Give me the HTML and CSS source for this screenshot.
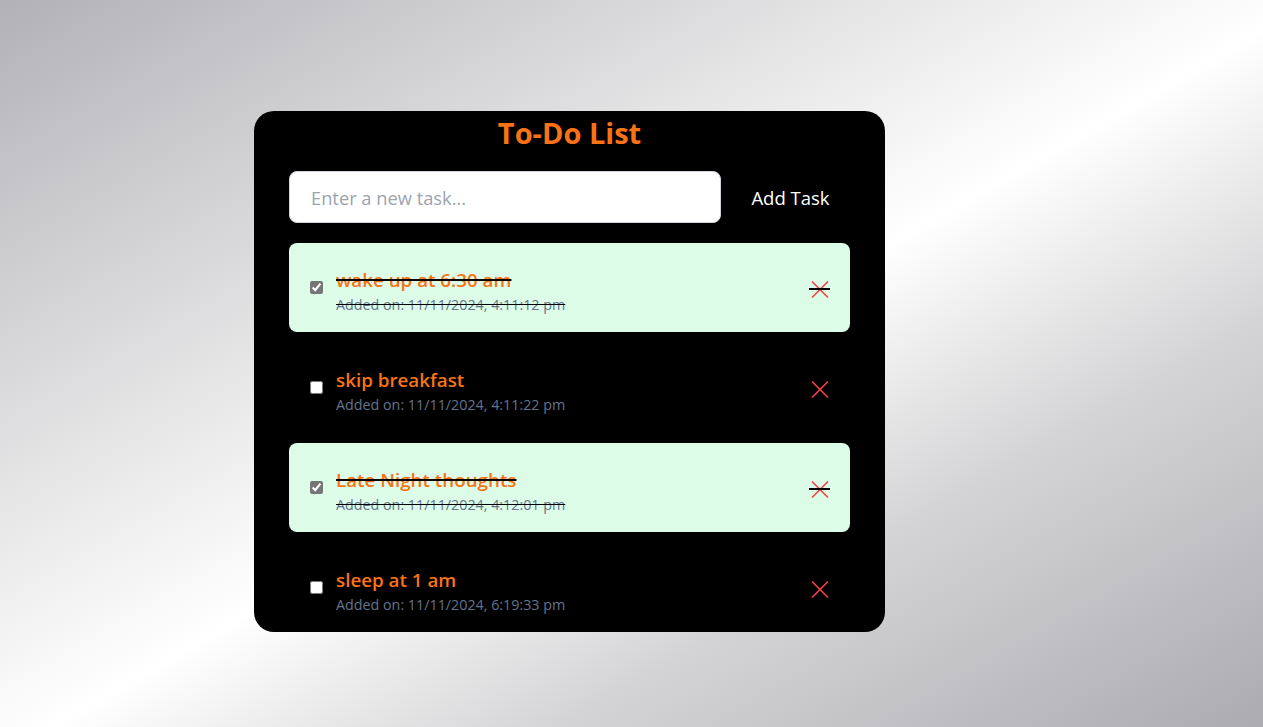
FILE: index.html
```html
<!DOCTYPE html>
<html lang="en">
<head>
<meta charset="utf-8">
<title>To-Do List</title>
<link rel="stylesheet" href="styles.css">
</head>
<body>
<main class="card">
  <h1 class="title">To-Do List</h1>
  <div class="add-row">
    <input class="task-input" type="text" placeholder="Enter a new task...">
    <button class="add-btn">Add Task</button>
  </div>
  <ul class="list">
    <li class="item done">
      <input class="check" type="checkbox" checked>
      <div class="info">
        <span class="name">wake up at 6:30 am</span>
        <span class="date">Added on: 11/11/2024, 4:11:12 pm</span>
      </div>
      <button class="del"><svg viewBox="0 0 18 17" width="18" height="17"><path d="M1 0.5 L17 16.5 M17 0.5 L1 16.5" stroke="#ef4444" stroke-width="1.6" fill="none"/></svg></button>
    </li>
    <li class="item">
      <input class="check" type="checkbox">
      <div class="info">
        <span class="name">skip breakfast</span>
        <span class="date">Added on: 11/11/2024, 4:11:22 pm</span>
      </div>
      <button class="del"><svg viewBox="0 0 18 17" width="18" height="17"><path d="M1 0.5 L17 16.5 M17 0.5 L1 16.5" stroke="#ef4444" stroke-width="1.6" fill="none"/></svg></button>
    </li>
    <li class="item done">
      <input class="check" type="checkbox" checked>
      <div class="info">
        <span class="name">Late Night thoughts</span>
        <span class="date">Added on: 11/11/2024, 4:12:01 pm</span>
      </div>
      <button class="del"><svg viewBox="0 0 18 17" width="18" height="17"><path d="M1 0.5 L17 16.5 M17 0.5 L1 16.5" stroke="#ef4444" stroke-width="1.6" fill="none"/></svg></button>
    </li>
    <li class="item">
      <input class="check" type="checkbox">
      <div class="info">
        <span class="name">sleep at 1 am</span>
        <span class="date">Added on: 11/11/2024, 6:19:33 pm</span>
      </div>
      <button class="del"><svg viewBox="0 0 18 17" width="18" height="17"><path d="M1 0.5 L17 16.5 M17 0.5 L1 16.5" stroke="#ef4444" stroke-width="1.6" fill="none"/></svg></button>
    </li>
  </ul>
</main>
</body>
</html>
```

FILE: styles.css
```css
* { box-sizing: border-box; }

html, body {
  margin: 0;
  height: 100%;
}

body {
  font-family: "Open Sans", "Noto Sans", sans-serif;
  background: linear-gradient(to bottom right, #b2b1b6 0%, #e6e6e7 35%, #ffffff 52%, #d4d4d6 72%, #acabb0 100%);
  padding: 111px 0 0 254px;
}

.card {
  width: 631px;
  height: 521px;
  background: #000;
  border-radius: 20px;
  padding: 0 35px;
  overflow: hidden;
}

.title {
  margin: 0;
  height: 44px;
  line-height: 44px;
  text-align: center;
  color: #f97316;
  font-size: 29px;
  font-weight: 700;
}

.add-row {
  display: flex;
  align-items: center;
  margin-top: 16px;
}

.task-input {
  width: 432px;
  height: 52px;
  border: 1px solid #d1d5db;
  border-radius: 8px;
  padding: 0 21px;
  font-family: inherit;
  font-size: 18.3px;
  color: #111;
  outline: none;
}

.task-input::placeholder { color: #9ca3af; }

.add-btn {
  flex: 1;
  background: transparent;
  border: none;
  color: #fff;
  font-family: inherit;
  font-size: 18.5px;
  text-align: center;
  padding: 0 0 0 10px;
  height: 52px;
}

.list {
  list-style: none;
  margin: 20px 0 0;
  padding: 0;
  display: flex;
  flex-direction: column;
  gap: 11px;
}

.item {
  height: 89px;
  flex-shrink: 0;
  display: flex;
  align-items: center;
  padding: 0 21px 0 17px;
  border-radius: 8px;
}

.item.done { background: #dcfce7; }

.check {
  width: 13px;
  height: 13px;
  margin: 3px 3px 3px 4px;
}

.item.done .check { accent-color: #767676; }

.info {
  flex: 1;
  display: flex;
  flex-direction: column;
  margin-left: 10px;
  gap: 2px;
  padding-top: 6px;
}

.name {
  color: #f97316;
  font-size: 18.8px;
  font-weight: 600;
  line-height: 26px;
}

.date {
  color: #64748b;
  font-size: 14.3px;
  line-height: 20px;
}

.done .name {
  text-decoration: line-through;
  text-decoration-color: #000;
  text-decoration-thickness: 2px;
}

.done .date {
  text-decoration: line-through;
  text-decoration-color: #000;
}

.del {
  position: relative;
  background: transparent;
  border: none;
  padding: 0;
  margin-top: 4px;
  width: 18px;
  height: 17px;
  display: flex;
  align-items: center;
  justify-content: center;
}

.del svg { display: block; }

.done .del::after {
  content: "";
  position: absolute;
  left: -2px;
  right: -1px;
  top: 7px;
  height: 2px;
  background: #000;
}
```
